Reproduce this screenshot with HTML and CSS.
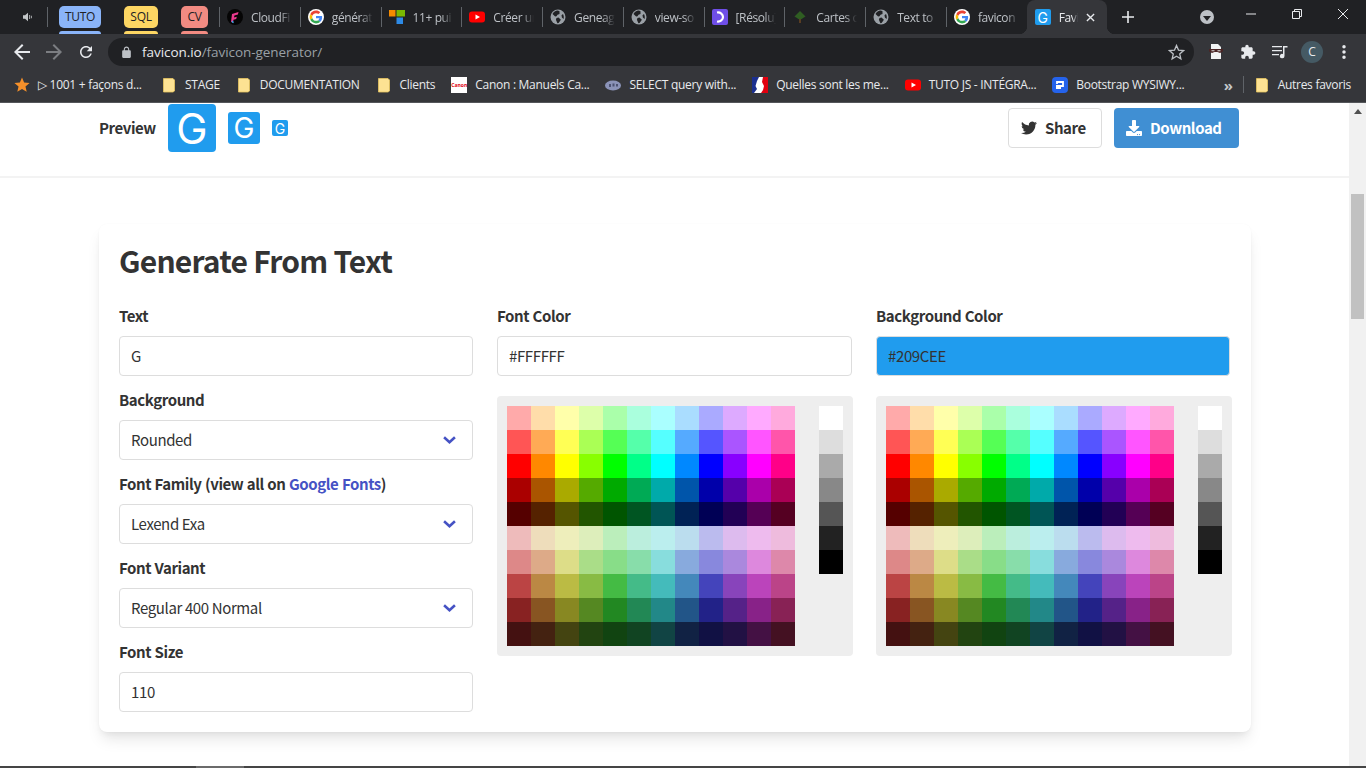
FILE: index.html
```html
<!DOCTYPE html>
<html lang="en">

<head>
    <meta charset="UTF-8">
    <meta name="viewport" content="width=device-width, initial-scale=1.0">
    <title>Favicon Generator</title>
    <link rel="stylesheet" href="styles.css">
</head>

<body>
    <svg class="defs" aria-hidden="true">
        <symbol id="google" viewBox="-6 -6 60 60">
            <circle cx="24" cy="24" r="30" fill="#fff" />
            <path fill="#EA4335" d="M24 9.5c3.54 0 6.71 1.22 9.21 3.6l6.85-6.85C35.9 2.38 30.47 0 24 0 14.62 0 6.51 5.38 2.56 13.22l7.98 6.19C12.43 13.72 17.74 9.5 24 9.5z" />
            <path fill="#4285F4" d="M46.98 24.55c0-1.57-.15-3.09-.38-4.55H24v9.02h12.94c-.58 2.96-2.26 5.48-4.78 7.18l7.73 6c4.51-4.18 7.09-10.36 7.09-17.65z" />
            <path fill="#FBBC05" d="M10.53 28.59c-.48-1.45-.76-2.99-.76-4.59s.27-3.14.76-4.59l-7.98-6.19C.92 16.46 0 20.12 0 24c0 3.88.92 7.54 2.56 10.78l7.97-6.19z" />
            <path fill="#34A853" d="M24 48c6.48 0 11.93-2.13 15.89-5.81l-7.73-6c-2.15 1.45-4.92 2.3-8.16 2.3-6.26 0-11.57-4.22-13.47-9.91l-7.98 6.19C6.51 42.62 14.62 48 24 48z" />
        </symbol>
        <symbol id="globe" viewBox="0 0 16 16">
            <circle cx="8" cy="8" r="7.5" fill="#9aa0a6" />
            <path fill="#202124" d="M7 1.6C5 2 3.4 3.2 2.5 5l2.6 2.6 1.4-.3 1-1.6 2-.8V2.2C8.700 1.700 7.900 1.500 7 1.600zM8.500 8.500l-2 .5-.6 1.800L7.400 14.300l1.200-.2 2.300-3.400zM13 5l-1.500 1.200.4 2.300 1.700 1.500c.4-1.700.2-3.500-.6-5z" />
        </symbol>
        <symbol id="youtube" viewBox="0 0 16 16">
            <rect y="2.500" width="16" height="11" rx="3" fill="#f00" />
            <path fill="#fff" d="M6.500 5.500v5L11 8z" />
        </symbol>
        <symbol id="folder" viewBox="0 0 16 16">
            <path fill="#fde293" stroke="#e8c65f" stroke-width=".8" d="M2.500 1.500h9.500l1.500 1.500v11l-1.500 1h-9.500z" />
        </symbol>
    </svg>

    <header class="tabstrip">
        <div class="audio">
            <svg class="ico10" viewBox="0 0 12 12">
                <path fill="#c4c7c9" d="M0 4h2.500L6 1v10L2.500 8H0zM7.500 3.500h1v5h-1zM9.500 4.500h1v3h-1z" />
            </svg>
        </div>
        <div class="groups">
            <div class="group group-tuto"><span class="chip">TUTO</span><span class="chip-bar"></span></div>
            <div class="group group-sql"><span class="chip">SQL</span><span class="chip-bar"></span></div>
            <div class="group group-cv"><span class="chip">CV</span><span class="chip-bar"></span></div>
        </div>
        <div class="tab">
            <svg class="ico16" viewBox="0 0 16 16">
                <circle cx="8" cy="8" r="8" fill="#050505" />
                <path fill="#e8398d" d="M5 5l6.500-2-.6 2.400L7.400 6.500 7 8.500l2.800-.8-.6 2.200-2.700.8-.7 3-1.800-1z" />
                <path fill="#35a7e8" d="M5 11.500l1.800 1.200-.3 1.500-1.800-1z" />
            </svg>
            <span class="tab-title">CloudFi</span>
        </div>
        <div class="tab"><svg class="ico16"><use href="#google" /></svg><span class="tab-title">générat</span></div>
        <div class="tab">
            <svg class="ico16" viewBox="0 0 16 16">
                <path fill="#f58b00" d="M0 1h6.500v6.500H0z" />
                <path fill="#7ab800" d="M7.500 1H16v6.500H7.500z" />
                <path fill="#2d8ae6" d="M7.500 8.500H14V15H7.500z" />
            </svg>
            <span class="tab-title">11+ pui</span>
        </div>
        <div class="tab"><svg class="ico16"><use href="#youtube" /></svg><span class="tab-title">Créer ur</span></div>
        <div class="tab"><svg class="ico16"><use href="#globe" /></svg><span class="tab-title">Geneag</span></div>
        <div class="tab"><svg class="ico16"><use href="#globe" /></svg><span class="tab-title">view-so</span></div>
        <div class="tab">
            <svg class="ico16" viewBox="0 0 16 16">
                <rect width="16" height="16" rx="2" fill="#6f4ee8" />
                <path fill="none" stroke="#fff" stroke-width="2.200" d="M5 3.500c3.500-.5 6 1.800 6 4.500s-2.500 5-6 4.500" />
            </svg>
            <span class="tab-title">[Résolu]</span>
        </div>
        <div class="tab">
            <svg class="ico16" viewBox="0 0 16 16">
                <path fill="#2f5d22" d="M8 2l5.500 5.500L8 11 2.500 7.500z" />
                <path fill="#5a3d22" d="M7 10h2v4H7z" />
            </svg>
            <span class="tab-title">Cartes c</span>
        </div>
        <div class="tab"><svg class="ico16"><use href="#globe" /></svg><span class="tab-title">Text to</span></div>
        <div class="tab"><svg class="ico16"><use href="#google" /></svg><span class="tab-title">favicon</span></div>
        <div class="tab tab-active">
            <span class="fav fav-16">G</span>
            <span class="tab-title">Favi</span>
            <svg class="tab-close" viewBox="0 0 10 10">
                <path fill="none" stroke="#e8eaed" stroke-width="1.500" d="M1 1l8 8M9 1l-8 8" />
            </svg>
        </div>
        <svg class="new-tab" viewBox="0 0 12 12">
            <path fill="#e8eaed" d="M5.200 0h1.600v5.200H12v1.600H6.800V12H5.200V6.800H0V5.200h5.200z" />
        </svg>
        <div class="tab-search"><span class="tab-search-arrow"></span></div>
        <div class="win-btn">
            <svg class="ico10" viewBox="0 0 10 10"><path fill="#e8eaed" d="M0 4.500h10v1H0z" /></svg>
        </div>
        <div class="win-btn">
            <svg class="ico10" viewBox="0 0 10 10"><path fill="none" stroke="#e8eaed" d="M.5 2.500h7v7h-7zM2.500 2.500v-2h7v7h-2" /></svg>
        </div>
        <div class="win-btn">
            <svg class="ico10" viewBox="0 0 10 10"><path fill="none" stroke="#e8eaed" d="M0 0l10 10M10 0L0 10" /></svg>
        </div>
    </header>

    <nav class="toolbar">
        <svg class="nav-ico" viewBox="0 0 24 24"><path fill="#e8eaed" d="M20 11H7.830l5.590-5.590L12 4l-8 8 8 8 1.410-1.410L7.830 13H20v-2z" /></svg>
        <svg class="nav-ico" viewBox="0 0 24 24"><path fill="#7c7e82" d="M12 4l-1.410 1.410L16.170 11H4v2h12.170l-5.580 5.590L12 20l8-8z" /></svg>
        <svg class="nav-ico nav-reload" viewBox="0 0 24 24"><path fill="#e8eaed" d="M17.650 6.350C16.200 4.900 14.210 4 12 4c-4.420 0-7.990 3.580-7.990 8s3.570 8 7.990 8c3.730 0 6.840-2.550 7.730-6h-2.080c-.82 2.330-3.040 4-5.650 4-3.310 0-6-2.690-6-6s2.690-6 6-6c1.660 0 3.140.69 4.220 1.780L13 11h7V4l-2.350 2.350z" /></svg>
        <div class="omnibox">
            <svg class="lock" viewBox="0 0 24 24"><path fill="#bdc1c6" d="M18 8h-1V6c0-2.760-2.240-5-5-5S7 3.240 7 6v2H6c-1.100 0-2 .9-2 2v10c0 1.100.9 2 2 2h12c1.100 0 2-.9 2-2V10c0-1.100-.9-2-2-2zM9 6c0-1.660 1.340-3 3-3s3 1.340 3 3v2H9V6z" /></svg>
            <span class="url"><span class="url-host">favicon.io</span>/favicon-generator/</span>
            <svg class="omni-star" viewBox="0 0 24 24"><path fill="none" stroke="#bdc1c6" stroke-width="1.800" d="M12 17.270L18.180 21l-1.640-7.030L22 9.240l-7.190-.61L12 2 9.190 8.630 2 9.240l5.460 4.730L5.820 21z" /></svg>
        </div>
        <div class="tools">
            <svg class="tool" viewBox="0 0 16 16">
                <path fill="#f1f3f4" d="M3 0h7l3 3v12H3z" />
                <path fill="#4a2525" d="M1 5h14v2.500l-3 1.500-2.500-1h-3L4 9 1 7.500z" />
                <path fill="#d8d8d8" d="M3.500 6.200h3v1h-3zM9.500 6.200h3v1h-3z" />
            </svg>
            <svg class="tool" viewBox="0 0 24 24"><path fill="#e8eaed" d="M20.500 11H19V7c0-1.100-.9-2-2-2h-4V3.500C13 2.120 11.880 1 10.500 1S8 2.120 8 3.500V5H4c-1.100 0-1.990.9-1.990 2v3.800H3.500c1.490 0 2.700 1.210 2.700 2.700s-1.210 2.700-2.700 2.700H2V20c0 1.100.9 2 2 2h3.800v-1.500c0-1.490 1.210-2.700 2.700-2.700 1.490 0 2.700 1.210 2.700 2.700V22H17c1.100 0 2-.9 2-2v-4h1.500c1.380 0 2.500-1.120 2.500-2.500S21.880 11 20.500 11z" /></svg>
            <svg class="tool" viewBox="0 0 16 16">
                <path fill="#e8eaed" d="M0 2h10v1.300H0zM0 6h10v1.300H0zM0 10h7v1.300H0zM11 2h4.500v1.600H12.500v8.400a2.300 2.300 0 1 1-1.500-2.100z" />
            </svg>
            <span class="avatar">C</span>
            <svg class="tool-dots" viewBox="0 0 4 16"><path fill="#e8eaed" d="M0 2a2 2 0 1 0 4 0 2 2 0 1 0-4 0zM0 8a2 2 0 1 0 4 0 2 2 0 1 0-4 0zM0 14a2 2 0 1 0 4 0 2 2 0 1 0-4 0z" /></svg>
        </div>
    </nav>

    <div class="bookmarks">
        <div class="bm bm-first">
            <svg class="ico16" viewBox="1.500 1.500 21 21"><path fill="#f5902a" d="M12 17.270L18.180 21l-1.640-7.030L22 9.240l-7.190-.61L12 2 9.190 8.630 2 9.240l5.460 4.730L5.820 21z" /></svg>
            <span>▷ 1001 + façons d...</span>
        </div>
        <div class="bm"><svg class="ico16"><use href="#folder" /></svg><span>STAGE</span></div>
        <div class="bm"><svg class="ico16"><use href="#folder" /></svg><span>DOCUMENTATION</span></div>
        <div class="bm"><svg class="ico16"><use href="#folder" /></svg><span>Clients</span></div>
        <div class="bm"><span class="canon">Canon</span><span>Canon : Manuels Ca...</span></div>
        <div class="bm">
            <svg class="ico16" viewBox="0 0 16 16">
                <ellipse cx="8" cy="8.500" rx="8" ry="5" fill="#8b93b8" />
                <path fill="#4c5272" d="M4 7h2v3H4zM7.500 6.500h2v3h-2zM11 7h2v2.500h-2z" />
            </svg>
            <span>SELECT query with...</span>
        </div>
        <div class="bm">
            <svg class="ico16" viewBox="0 0 16 16">
                <path fill="#fff" d="M0 0h16v16H0z" />
                <path fill="#1b2f8f" d="M0 0h7L5 4 3.500 9 5 12 2 16H0z" />
                <path fill="#e1000f" d="M11 0h5v16H9l2-3 1-4-2-4z" />
            </svg>
            <span>Quelles sont les me...</span>
        </div>
        <div class="bm"><svg class="ico16"><use href="#youtube" /></svg><span>TUTO JS - INTÉGRA...</span></div>
        <div class="bm">
            <svg class="ico16" viewBox="0 0 16 16">
                <rect width="16" height="16" rx="4" fill="#2563eb" />
                <path fill="none" stroke="#fff" stroke-width="1.800" d="M5 7V5h6v4H9" />
                <path fill="#fff" d="M4 8h5v4H4z" />
            </svg>
            <span>Bootstrap WYSIWY...</span>
        </div>
        <span class="bm-more">»</span>
        <div class="bm bm-other"><svg class="ico16"><use href="#folder" /></svg><span>Autres favoris</span></div>
    </div>

    <div class="viewport">
        <main class="page">
            <section class="preview-bar">
                <strong class="preview-label">Preview</strong>
                <span class="fav fav-48">G</span>
                <span class="fav fav-32">G</span>
                <span class="fav fav-16">G</span>
                <div class="actions">
                    <a class="btn btn-share">
                        <svg class="btn-ico" viewBox="0 0 24 24"><path fill="#333" d="M23.953 4.570a10 10 0 01-2.825.775 4.958 4.958 0 002.163-2.723c-.951.555-2.005.959-3.127 1.184a4.920 4.920 0 00-8.384 4.482C7.690 8.095 4.067 6.130 1.640 3.162a4.822 4.822 0 00-.666 2.475c0 1.710.870 3.213 2.188 4.096a4.904 4.904 0 01-2.228-.616v.060a4.923 4.923 0 003.946 4.827 4.996 4.996 0 01-2.212.085 4.936 4.936 0 004.604 3.417 9.867 9.867 0 01-6.102 2.105c-.390 0-.779-.023-1.170-.067a13.995 13.995 0 007.557 2.209c9.053 0 13.998-7.496 13.998-13.985 0-.210 0-.420-.015-.630A9.935 9.935 0 0024 4.590z" /></svg>
                        <span class="btn-text">Share</span>
                    </a>
                    <a class="btn btn-download">
                        <svg class="btn-ico" viewBox="0 0 512 512"><path fill="#fff" d="M216 0h80c13.300 0 24 10.700 24 24v168h87.700c17.800 0 26.700 21.500 14.100 34.100L269.700 378.300c-7.500 7.500-19.800 7.500-27.300 0L90.100 226.100c-12.600-12.600-3.700-34.100 14.100-34.100H192V24c0-13.300 10.700-24 24-24zm296 376v112c0 13.300-10.700 24-24 24H24c-13.300 0-24-10.700-24-24V376c0-13.300 10.700-24 24-24h146.700l49 49c20.100 20.100 52.500 20.100 72.600 0l49-49H488c13.300 0 24 10.700 24 24zm-124 88c0-11-9-20-20-20s-20 9-20 20 9 20 20 20 20-9 20-20zm64 0c0-11-9-20-20-20s-20 9-20 20 9 20 20 20 20-9 20-20z" /></svg>
                        <span class="btn-text">Download</span>
                    </a>
                </div>
            </section>

            <section class="card">
                <h1>Generate From Text</h1>
                <div class="columns">
                    <div class="column">
                        <label>Text</label>
                        <div class="field">G</div>
                        <label>Background</label>
                        <div class="field field-select">Rounded<svg class="chevron" viewBox="0 0 12 7"><path fill="none" stroke="#4552c4" stroke-width="2.400" d="M1 1l5 4.500L11 1" /></svg></div>
                        <label>Font Family (view all on <a class="link">Google Fonts</a>)</label>
                        <div class="field field-select">Lexend Exa<svg class="chevron" viewBox="0 0 12 7"><path fill="none" stroke="#4552c4" stroke-width="2.400" d="M1 1l5 4.500L11 1" /></svg></div>
                        <label>Font Variant</label>
                        <div class="field field-select">Regular 400 Normal<svg class="chevron" viewBox="0 0 12 7"><path fill="none" stroke="#4552c4" stroke-width="2.400" d="M1 1l5 4.500L11 1" /></svg></div>
                        <label>Font Size</label>
                        <div class="field field-last">110</div>
                    </div>
                    <div class="column">
                        <label>Font Color</label>
                        <div class="field">#FFFFFF</div>
                        <div class="palette"></div>
                    </div>
                    <div class="column">
                        <label>Background Color</label>
                        <div class="field field-blue">#209CEE</div>
                        <div class="palette"></div>
                    </div>
                </div>
            </section>
        </main>
        <div class="scrollbar">
            <span class="scroll-up"></span>
            <span class="scroll-thumb"></span>
        </div>
    </div>
    <div class="taskbar"><span class="taskbar-item"></span></div>

    <script src="palette.js"></script>
</body>

</html>
```

FILE: styles.css
```css
* {
    box-sizing: border-box;
}

html,
body {
    margin: 0;
    height: 768px;
    overflow: hidden;
}

body {
    display: flex;
    flex-direction: column;
    background-color: #fff;
    font-family: "Noto Sans CJK SC", "Noto Sans", sans-serif;
    color: #333;
}

.defs {
    display: none;
}

.ico16 {
    width: 16px;
    height: 16px;
    flex: none;
}

.ico10 {
    width: 10px;
    height: 10px;
    flex: none;
}

/* tab strip */

.tabstrip {
    display: flex;
    height: 34px;
    flex: none;
    background-color: #202124;
    font-family: "Open Sans", "Noto Sans", sans-serif;
    font-size: 12px;
}

.audio {
    display: flex;
    align-items: center;
    justify-content: flex-end;
    width: 48px;
    height: 20px;
    margin-top: 7px;
    padding-right: 14px;
    border-right: 1px solid #5f6368;
}

.groups {
    display: flex;
    gap: 23px;
    padding: 0 11px;
}

.group {
    display: flex;
    flex-direction: column;
    gap: 3px;
    padding-top: 6px;
}

.group-tuto {
    width: 42px;
}

.group-sql {
    width: 34px;
}

.group-cv {
    width: 27px;
}

.chip {
    height: 22px;
    border-radius: 5px;
    color: #202124;
    letter-spacing: -0.3px;
    line-height: 22px;
    text-align: center;
}

.chip-bar {
    height: 3px;
    border-radius: 3px 3px 0 0;
}

.group-tuto .chip,
.group-tuto .chip-bar {
    background-color: #8ab4f8;
}

.group-sql .chip,
.group-sql .chip-bar {
    background-color: #fdd663;
}

.group-cv .chip,
.group-cv .chip-bar {
    background-color: #f28b82;
}

.tab {
    display: flex;
    align-items: center;
    gap: 8px;
    width: 80.770px;
    height: 20px;
    flex: none;
    margin-top: 7px;
    padding-left: 7px;
    border-left: 1px solid #5f6368;
    color: #bdc1c6;
}

.tab-title {
    flex: 1;
    overflow: hidden;
    margin-right: 8px;
    white-space: nowrap;
    letter-spacing: -0.4px;
    -webkit-mask-image: linear-gradient(to right, #000 70%, transparent);
    mask-image: linear-gradient(to right, #000 70%, transparent);
}

.tab-active {
    position: relative;
    height: 34px;
    margin-top: 0;
    padding-left: 8px;
    border-left: 0;
    border-radius: 8px 8px 0 0;
    background-color: #35363a;
    color: #e8eaed;
}

.tab-active::before,
.tab-active::after {
    content: "";
    position: absolute;
    bottom: 0;
    width: 8px;
    height: 8px;
}

.tab-active::before {
    left: -8px;
    background: radial-gradient(circle at 0 0, #202124 8px, #35363a 8.5px);
}

.tab-active::after {
    right: -8px;
    background: radial-gradient(circle at 100% 0, #202124 8px, #35363a 8.5px);
}

.tab-active .tab-title {
    margin-right: 0;
}

.tab-close {
    width: 9px;
    height: 9px;
    margin-right: 12px;
    flex: none;
}

.new-tab {
    width: 12px;
    height: 12px;
    margin: 11px 0 0 15px;
    flex: none;
}

.tab-search {
    display: flex;
    align-items: center;
    justify-content: center;
    width: 14px;
    height: 14px;
    margin: 10px 14px 0 auto;
    border-radius: 50%;
    background-color: #bdc1c6;
}

.tab-search-arrow {
    margin-top: 2px;
    border-top: 5px solid #202124;
    border-left: 4px solid transparent;
    border-right: 4px solid transparent;
}

.win-btn {
    display: flex;
    align-items: center;
    justify-content: center;
    width: 46px;
    height: 28px;
}

/* favicon previews */

.fav {
    display: flex;
    align-items: center;
    justify-content: center;
    flex: none;
    background-color: #209cee;
    color: #fff;
    font-family: Inter, sans-serif;
    font-weight: 400;
    letter-spacing: 0;
}

.fav-48 {
    width: 48px;
    height: 48px;
    border-radius: 4px;
    font-size: 42px;
}

.fav-32 {
    width: 32px;
    height: 32px;
    border-radius: 3px;
    font-size: 28px;
}

.fav-16 {
    width: 16px;
    height: 16px;
    border-radius: 2px;
    font-size: 14px;
}

/* toolbar */

.toolbar {
    display: flex;
    align-items: center;
    height: 33px;
    flex: none;
    padding: 4px 0 1px 10px;
    background-color: #35363a;
}

.nav-ico {
    width: 24px;
    height: 24px;
    margin-right: 8px;
    flex: none;
}

.nav-reload {
    width: 18px;
    height: 18px;
    margin: 0 13px 0 3px;
}

.omnibox {
    display: flex;
    align-items: center;
    width: 1086px;
    height: 28px;
    padding: 0 9px 0 12px;
    border-radius: 14px;
    background-color: #202124;
    font-family: "Open Sans", "Noto Sans", sans-serif;
    font-size: 13.500px;
    letter-spacing: -0.05px;
    color: #9aa0a6;
}

.lock {
    width: 13px;
    height: 13px;
    margin-right: 9px;
    flex: none;
}

.url-host {
    color: #e8eaed;
}

.omni-star {
    width: 17px;
    height: 17px;
    margin-left: auto;
}

.tools {
    display: flex;
    align-items: center;
    gap: 16px;
    margin-left: 14px;
}

.tool {
    width: 16px;
    height: 16px;
    flex: none;
}

.avatar {
    width: 22px;
    height: 22px;
    margin-left: -3px;
    border-radius: 50%;
    background-color: #455a64;
    color: #e8eaed;
    font-family: "Open Sans", sans-serif;
    font-size: 12px;
    line-height: 22px;
    text-align: center;
}

.tool-dots {
    width: 4px;
    height: 14px;
    margin-left: 3px;
}

/* bookmarks bar */

.bookmarks {
    display: flex;
    align-items: center;
    gap: 16px;
    height: 36px;
    flex: none;
    padding-left: 14px;
    border-bottom: 1px solid #54565a;
    background-color: #35363a;
    font-family: "Open Sans", "Noto Sans", sans-serif;
    font-size: 12px;
    letter-spacing: -0.28px;
    color: #e8eaed;
    white-space: nowrap;
}

.bm {
    display: flex;
    align-items: center;
    gap: 8px;
}

.bm-first span {
    width: 107px;
}

.canon {
    width: 16px;
    height: 16px;
    overflow: hidden;
    background-color: #fff;
    color: #e1000f;
    font-size: 5px;
    font-weight: 700;
    letter-spacing: 0;
    line-height: 16px;
    text-align: center;
}

.bm-more {
    margin-left: auto;
    margin-right: -6px;
    font-size: 15px;
    font-weight: 700;
    line-height: 16px;
    color: #c4c7c9;
}

.bm-other {
    margin-right: 15px;
    padding-left: 10px;
    border-left: 1px solid #5f6368;
}

/* page */

.viewport {
    display: flex;
    flex: 1;
    min-height: 0;
}

.page {
    flex: 1;
    min-width: 0;
}

.preview-bar {
    display: flex;
    align-items: center;
    padding: 1px 110px 24px 99px;
    border-bottom: 2px solid #f3f3f3;
}

.preview-label {
    width: 57px;
    margin-right: 12px;
    padding-bottom: 2px;
    font-size: 15px;
    font-weight: 700;
    letter-spacing: -0.42px;
}

.preview-bar .fav-32,
.preview-bar .fav-16 {
    margin-left: 12px;
}

.actions {
    display: flex;
    gap: 12px;
    margin-left: auto;
}

.btn {
    display: flex;
    align-items: center;
    gap: 8px;
    height: 40px;
    padding: 0 16px 0 12px;
    border-radius: 4px;
    font-size: 15px;
    font-weight: 700;
    letter-spacing: -0.42px;
}

.btn-text {
    padding-bottom: 2px;
}

.btn-ico {
    width: 16px;
    height: 16px;
    flex: none;
}

.btn-share {
    width: 94px;
    border: 1px solid #ddd;
}

.btn-download {
    width: 125px;
    background-color: #408fd3;
    color: #fff;
}

.card {
    width: 1152px;
    margin: 46px 0 0 99px;
    padding: 20px;
    border-radius: 8px;
    background-color: #fff;
    box-shadow: 0 10px 15px -3px rgba(0, 0, 0, 0.1), 0 4px 6px -2px rgba(0, 0, 0, 0.05), 0 0 2px rgba(0, 0, 0, 0.03);
}

h1 {
    margin: 0 0 28px;
    font-size: 30px;
    font-weight: 700;
    letter-spacing: -0.78px;
    line-height: 32px;
}

.columns {
    display: grid;
    grid-template-columns: 354px 355px 354px;
    gap: 24px;
}

.column {
    min-width: 0;
}

label {
    display: block;
    margin-bottom: 8px;
    font-size: 15px;
    font-weight: 700;
    letter-spacing: -0.42px;
    word-spacing: 0.5px;
    line-height: 24px;
}

.link {
    color: #4552c4;
}

.field {
    display: flex;
    align-items: center;
    justify-content: space-between;
    height: 40px;
    margin-bottom: 12px;
    padding: 0 16px 0 11px;
    border: 1px solid #ddd;
    border-radius: 4px;
    background-color: #fff;
    font-size: 15px;
    letter-spacing: -0.38px;
    line-height: 24px;
}

.field-last {
    margin-bottom: 0;
}

.field-blue {
    background-color: #209cee;
}

.chevron {
    width: 13px;
    height: 8px;
    flex: none;
}

.palette {
    display: flex;
    gap: 24px;
    width: 356px;
    height: 260px;
    margin-top: 20px;
    padding: 10px;
    border-radius: 4px;
    background-color: #eee;
}

.swatches {
    display: grid;
    grid-template-columns: repeat(12, 24px);
    grid-auto-rows: 24px;
}

.greys {
    display: grid;
    grid-template-columns: 24px;
    grid-auto-rows: 24px;
}

/* scrollbar */

.scrollbar {
    display: flex;
    flex-direction: column;
    align-items: center;
    width: 17px;
    flex: none;
    background-color: #f1f1f1;
}

.scroll-up {
    margin-top: 6px;
    border-bottom: 5px solid #505050;
    border-left: 4px solid transparent;
    border-right: 4px solid transparent;
}

.scroll-thumb {
    width: 13px;
    height: 125px;
    margin-top: 80px;
    background-color: #c1c1c1;
}

.taskbar {
    height: 2px;
    flex: none;
    padding-left: 196px;
    background-color: #454545;
}

.taskbar-item {
    display: block;
    width: 48px;
    height: 2px;
    background-color: #6b6b6b;
}
```

FILE: palette.js
```js
// each row is one shade, each entry goes round the colour wheel
const rows = [
    ['faa', 'fda', 'ffa', 'dfa', 'afa', 'afd', 'aff', 'adf', 'aaf', 'daf', 'faf', 'fad'],
    ['f55', 'fa5', 'ff5', 'af5', '5f5', '5fa', '5ff', '5af', '55f', 'a5f', 'f5f', 'f5a'],
    ['f00', 'f80', 'ff0', '8f0', '0f0', '0f8', '0ff', '08f', '00f', '80f', 'f0f', 'f08'],
    ['a00', 'a50', 'aa0', '5a0', '0a0', '0a5', '0aa', '05a', '00a', '50a', 'a0a', 'a05'],
    ['500', '520', '550', '250', '050', '052', '055', '025', '005', '205', '505', '502'],
    ['ebb', 'edb', 'eeb', 'deb', 'beb', 'bed', 'bee', 'bde', 'bbe', 'dbe', 'ebe', 'ebd'],
    ['d88', 'da8', 'dd8', 'ad8', '8d8', '8da', '8dd', '8ad', '88d', 'a8d', 'd8d', 'd8a'],
    ['b44', 'b84', 'bb4', '8b4', '4b4', '4b8', '4bb', '48b', '44b', '84b', 'b4b', 'b48'],
    ['822', '852', '882', '582', '282', '285', '288', '258', '228', '528', '828', '825'],
    ['411', '421', '441', '241', '141', '142', '144', '124', '114', '214', '414', '412']
];
const greys = ['fff', 'ddd', 'aaa', '888', '555', '222', '000'];

function addCells(parent, colors) {
    colors.forEach(color => {
        const cell = document.createElement('span');
        cell.style.backgroundColor = '#' + color;
        parent.appendChild(cell);
    });
}

document.querySelectorAll('.palette').forEach(palette => {
    const swatches = document.createElement('div');
    swatches.className = 'swatches';
    rows.forEach(row => addCells(swatches, row));

    const greyColumn = document.createElement('div');
    greyColumn.className = 'greys';
    addCells(greyColumn, greys);

    palette.appendChild(swatches);
    palette.appendChild(greyColumn);
});
```
